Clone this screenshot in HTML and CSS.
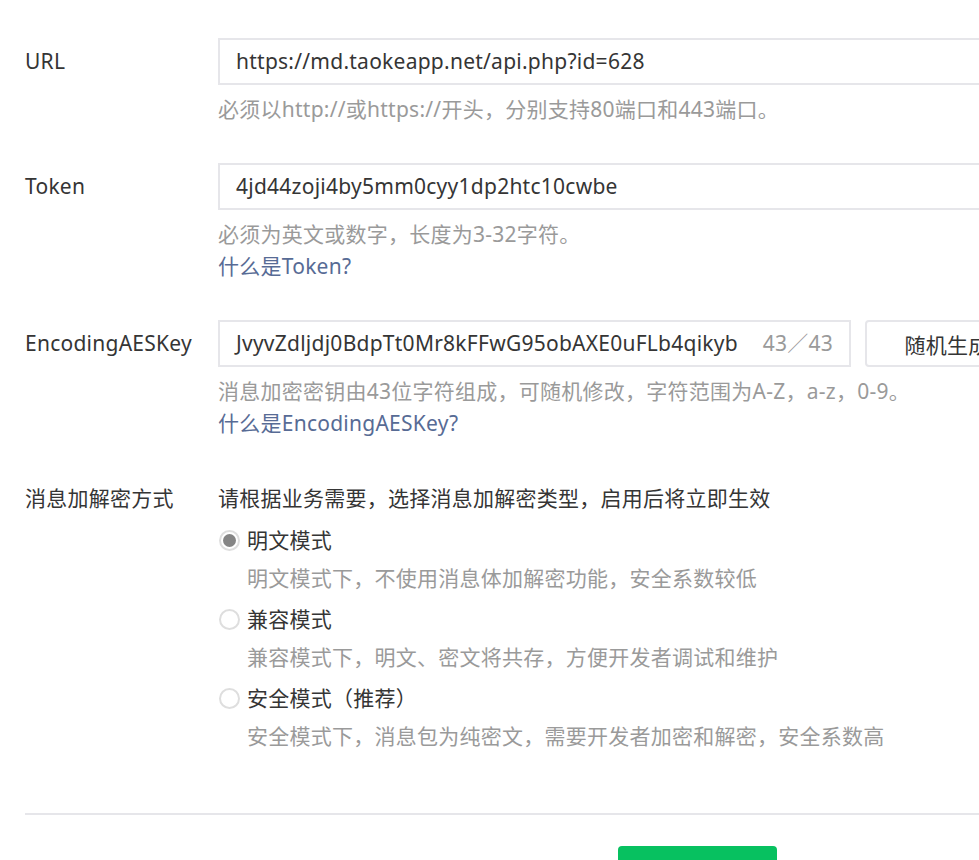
FILE: index.html
```html
<!DOCTYPE html>
<html lang="zh-CN">
<head>
    <meta charset="UTF-8">
    <meta name="viewport" content="width=device-width, initial-scale=1.0">
    <title>服务器配置</title>
    <link rel="stylesheet" href="styles.css">
</head>
<body>
    <div class="page">
        <div class="form">
            <!-- URL -->
            <div class="row">
                <div class="row-label">URL</div>
                <div class="row-body">
                    <div class="field field-wide">https://md.taokeapp.net/api.php?id=628</div>
                    <p class="hint">必须以http://或https://开头，分别支持80端口和443端口。</p>
                </div>
            </div>

            <!-- Token -->
            <div class="row">
                <div class="row-label">Token</div>
                <div class="row-body">
                    <div class="field field-wide">4jd44zoji4by5mm0cyy1dp2htc10cwbe</div>
                    <p class="hint">必须为英文或数字，长度为3-32字符。</p>
                    <a class="link" href="#">什么是Token?</a>
                </div>
            </div>

            <!-- EncodingAESKey -->
            <div class="row">
                <div class="row-label">EncodingAESKey</div>
                <div class="row-body">
                    <div class="field-group">
                        <div class="field field-key">
                            <span>JvyvZdljdj0BdpTt0Mr8kFFwG95obAXE0uFLb4qikyb</span>
                            <span class="counter">43／43</span>
                        </div>
                        <button class="btn-default">随机生成</button>
                    </div>
                    <p class="hint">消息加密密钥由43位字符组成，可随机修改，字符范围为A-Z，a-z，0-9。</p>
                    <a class="link" href="#">什么是EncodingAESKey?</a>
                </div>
            </div>

            <!-- 加解密方式 -->
            <div class="row row-mode">
                <div class="row-label">消息加解密方式</div>
                <div class="row-body">
                    <p class="mode-desc">请根据业务需要，选择消息加解密类型，启用后将立即生效</p>
                    <div class="radio-item">
                        <div class="radio checked">明文模式</div>
                        <p class="radio-desc">明文模式下，不使用消息体加解密功能，安全系数较低</p>
                    </div>
                    <div class="radio-item">
                        <div class="radio">兼容模式</div>
                        <p class="radio-desc">兼容模式下，明文、密文将共存，方便开发者调试和维护</p>
                    </div>
                    <div class="radio-item">
                        <div class="radio">安全模式（推荐）</div>
                        <p class="radio-desc">安全模式下，消息包为纯密文，需要开发者加密和解密，安全系数高</p>
                    </div>
                </div>
            </div>
        </div>

        <div class="divider"></div>
        <div class="actions">
            <button class="btn-primary">提交</button>
        </div>
    </div>
</body>
</html>
```

FILE: styles.css
```css
html, body {
    margin: 0;
    overflow: hidden;
    background-color: #fff;
}
body {
    font-family: "Noto Sans", "Noto Sans CJK SC", sans-serif;
    font-size: 21px;
    letter-spacing: 0.25px;
    color: #353535;
}
.page {
    width: 1345px;
    padding: 38px 0 0 25px;
}
.row {
    display: flex;
    margin-bottom: 38px;
}
.row-label {
    width: 193px;
    flex-shrink: 0;
    line-height: 46px;
}
.row-body {
    flex: 1;
}
.field {
    box-sizing: border-box;
    height: 47px;
    line-height: 43px;
    padding: 0 16px;
    border: 2px solid #e6e6ea;
    white-space: nowrap;
}
.field-wide {
    width: 820px;
}
.field-group {
    display: flex;
    gap: 14px;
}
.field-key {
    width: 633px;
    display: flex;
    justify-content: space-between;
}
.counter {
    color: #9a9a9a;
}
.btn-default {
    box-sizing: border-box;
    width: 164px;
    height: 47px;
    padding: 0;
    border: 2px solid #e6e6ea;
    border-radius: 4px;
    background-color: #fff;
    font: inherit;
    letter-spacing: inherit;
    color: #353535;
}
.hint {
    margin: 8px 0 0;
    line-height: 32px;
    color: #9a9a9a;
}
.link {
    display: block;
    line-height: 32px;
    color: #576b95;
    text-decoration: none;
}
.row-mode {
    margin-top: 41px;
}
.row-mode .row-label {
    line-height: 36px;
}
.mode-desc {
    margin: 0 0 6px;
    line-height: 36px;
}
.radio-item {
    margin-bottom: 5px;
}
.radio {
    position: relative;
    padding-left: 29px;
    line-height: 36px;
}
.radio::before {
    content: "";
    position: absolute;
    left: 1px;
    top: 8px;
    width: 17px;
    height: 17px;
    border: 2px solid #dedede;
    border-radius: 50%;
    background-color: #fff;
}
.radio.checked::after {
    content: "";
    position: absolute;
    left: 5px;
    top: 12px;
    width: 13px;
    height: 13px;
    border-radius: 50%;
    background-color: #858585;
}
.radio-desc {
    margin: 2px 0 0;
    padding-left: 29px;
    line-height: 36px;
    color: #9a9a9a;
}
.divider {
    height: 2px;
    margin-top: 54px;
    background-color: #e6e6ea;
}
.actions {
    padding-top: 31px;
    text-align: center;
}
.btn-primary {
    width: 159px;
    height: 62px;
    border: none;
    border-radius: 4px;
    background-color: #07c160;
    color: #fff;
    font: inherit;
}
```
